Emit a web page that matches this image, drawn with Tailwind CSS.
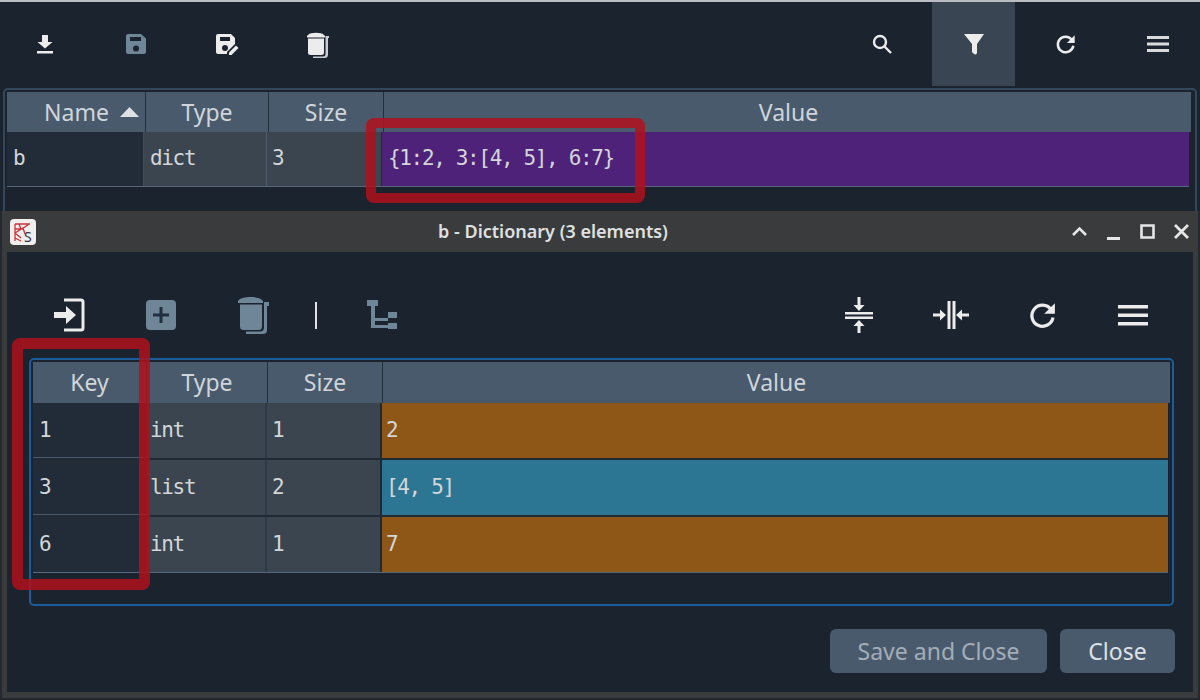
<!DOCTYPE html>
<html lang="en">
<head>
  <meta charset="UTF-8" />
  <title>b - Dictionary (3 elements)</title>
  <script src="https://cdn.jsdelivr.net/npm/@tailwindcss/browser@4"></script>
</head>
<body class="bg-[#1a232e] overflow-hidden">
<div class="relative w-[1200px] h-[700px] overflow-hidden flex flex-col font-['Noto_Sans',sans-serif] text-[#cfd5da]">
  <div class="h-[2px] bg-[#b9bec4] shrink-0"></div>

  <!-- main toolbar -->
  <div class="h-[84px] shrink-0 flex justify-between pl-[3px] pr-[1px]">
    <div class="flex gap-[8px]">
      <button class="w-[83px] flex items-center justify-center">
        <svg width="24" height="24" viewBox="0 0 24 24" fill="#ececec"><path d="M9 3h6v7h4.500L12 16.500 4.500 10H9z"/><path d="M4 19h16v2.500H4z"/></svg>
      </button>
      <button class="w-[83px] flex items-center justify-center">
        <svg width="24" height="24" viewBox="0 0 24 24" fill="#6f8598"><path fill-rule="evenodd" d="M4 2h13l5 4.500V20a2 2 0 0 1-2 2H4a2 2 0 0 1-2-2V4a2 2 0 0 1 2-2zm2 3v4h11V5zm6 8.500a3 3 0 1 0 0 6 3 3 0 0 0 0-6z"/></svg>
      </button>
      <button class="w-[83px] flex items-center justify-center">
        <svg width="24" height="24" viewBox="0 0 24 24" fill="#ececec"><path fill-rule="evenodd" d="M3 2h13l4 4v6l-8 8v2H3a2 2 0 0 1-2-2V4a2 2 0 0 1 2-2zm2 3v4h10V5zm5 8a3 3 0 1 0 0 6 3 3 0 0 0 0-6z"/><path d="M14 20.500l7-7 2.500 2.500-7 7H14z"/></svg>
      </button>
      <button class="w-[83px] flex items-center justify-center">
        <svg width="22" height="27" viewBox="0 0 22 27" fill="#ececec"><path d="M1 4C3 1 15 1 17 4l1 1v1.500H0V5z"/><path d="M1 7.500h16v14a2.500 2.500 0 0 1-2.500 2.500h-11A2.500 2.500 0 0 1 1 21.500z"/><path d="M18.500 5H22v2h-1v16.500a3.500 3.500 0 0 1-3.500 3.500H6v-1.500h10a2.500 2.500 0 0 0 2.500-2.500z" fill="#c9ccd0"/></svg>
      </button>
    </div>
    <div class="flex gap-[9px]">
      <button class="w-[83px] flex items-center justify-center">
        <svg width="24" height="24" viewBox="0 0 24 24" fill="none" stroke="#ececec" stroke-width="2.400"><circle cx="10" cy="10" r="6"/><path d="M14.500 14.500 21 21"/></svg>
      </button>
      <button class="w-[83px] flex items-center justify-center bg-[#3a4553]">
        <svg width="22" height="24" viewBox="0 0 22 24" fill="#ececec"><path d="M1 2h20l-7 10v8.500c0 1.500-1 2.500-3 1.500l-2-2v-8z"/></svg>
      </button>
      <button class="w-[83px] flex items-center justify-center">
        <svg width="22" height="22" viewBox="0 0 24 24" fill="none" stroke="#ececec" stroke-width="2.800"><path d="M18.500 7.500A8.500 8.500 0 1 0 20 14"/><path d="M21.500 2.500v8.500H13z" fill="#ececec" stroke="none"/></svg>
      </button>
      <button class="w-[83px] flex items-center justify-center">
        <svg width="22" height="16" viewBox="0 0 22 16" fill="#d9dadc"><path d="M0 0h22v3H0zM0 6.500h22v3H0zM0 13h22v3H0z"/></svg>
      </button>
    </div>
  </div>

  <!-- variable table -->
  <div class="h-[123px] shrink-0 ml-[3px] mr-[3px] mt-[2px] border-x-2 border-t-2 border-[#34475a] rounded-t-[5px] pl-[2px] pr-[4px] pt-[2px]">
    <div class="grid grid-cols-[139px_123px_115px_1fr] h-[40px] bg-[#4a5a6d] text-[23px] leading-[40px] text-center">
      <div class="border-r border-[#22303d] flex items-center justify-center gap-[11px] pl-[31px]">Name<svg width="19" height="10" viewBox="0 0 19 10" fill="#dfe2e5" class="shrink-0"><path d="M9.500 0 19 10H0z"/></svg></div>
      <div class="border-r border-[#22303d]">Type</div>
      <div class="border-r border-[#22303d]">Size</div>
      <div class="pl-[2px]">Value</div>
    </div>
    <div class="grid grid-cols-[137px_123px_115px_1fr] h-[55px] font-['DejaVu_Sans_Mono',monospace] text-[21px] tracking-[-1.350px] leading-[52px] text-[#d3d6d9] border-b border-[#56677a] mr-[2px]">
      <div class="bg-[#222c38] border-r border-[#3d4e60] pl-[6px]">b</div>
      <div class="bg-[#3b4550] border-r border-[#4d5c6c] pl-[6px]">dict</div>
      <div class="bg-[#3b4550] border-r border-[#1f2a35] pl-[5px]">3</div>
      <div class="bg-[#4f227a] pl-[6px]">{1:2, 3:[4, 5], 6:7}</div>
    </div>
  </div>

  <!-- dialog -->
  <div class="flex-1 flex flex-col bg-[#3a3b3c] border-x-2 border-b-2 border-[#23292f]">
    <div class="h-[41px] shrink-0 flex items-center pl-[8px] pr-[7px]">
      <svg width="26" height="26" viewBox="0 0 26 26" class="shrink-0">
        <rect width="26" height="26" rx="4" fill="#f1eeee"/>
        <path d="M5 5h15M5 5v17M5 10h7l7-5M5 14l8-5 2 6M9 5l2 5M5 19l6 3M5 14l6 5" fill="none" stroke="#c8353f" stroke-width="1.300"/>
        <text x="14" y="23" font-family="Noto Sans" font-size="14" fill="#2d333a">S</text>
      </svg>
      <div class="flex-1 text-center text-[18px] font-semibold text-[#dfe0e1]">b - Dictionary (3 elements)</div>
      <div class="flex items-center gap-[15px]">
        <svg width="19" height="19" viewBox="0 0 19 19" fill="none" stroke="#e6e6e6" stroke-width="2.600"><path d="M3 13l6.500-6.500L16 13"/></svg>
        <svg width="19" height="19" viewBox="0 0 19 19" fill="#e6e6e6"><path d="M3 15h13v3H3z"/></svg>
        <svg width="19" height="19" viewBox="0 0 19 19" fill="none" stroke="#e6e6e6" stroke-width="2.600"><path d="M3.500 3.500h12v12h-12z"/></svg>
        <svg width="19" height="19" viewBox="0 0 19 19" fill="none" stroke="#e6e6e6" stroke-width="2.800"><path d="M3 3l13 13M16 3 3 16"/></svg>
      </div>
    </div>

    <div class="flex-1 mx-[5px] mb-[6px] bg-[#1a232e] flex flex-col">
      <!-- dialog toolbar -->
      <div class="h-[106px] shrink-0 pt-[20px] flex justify-between items-center pl-[16px] pr-[16px]">
        <div class="flex items-center">
          <button class="w-[92px] flex justify-center">
            <svg width="32" height="34" viewBox="0 0 32 34" fill="none"><path d="M1 14h12V8l10 9-10 9v-6H1z" fill="#ececec"/><path d="M11 2h17a2 2 0 0 1 2 2v26a2 2 0 0 1-2 2H11" stroke="#ececec" stroke-width="3"/></svg>
          </button>
          <button class="w-[92px] flex justify-center">
            <svg width="30" height="30" viewBox="0 0 30 30"><rect width="30" height="30" rx="4" fill="#6f8598"/><path d="M13.500 7h3v6.500H23v3h-6.500V23h-3v-6.500H7v-3h6.500z" fill="#22303d"/></svg>
          </button>
          <button class="w-[92px] flex justify-center">
            <svg width="31" height="40" viewBox="0 0 31 40" fill="#6f8598"><path d="M1 5C4 1 21 1 24 5l1 1v2H0V6z"/><path d="M2 9.500h22v22a3.500 3.500 0 0 1-3.500 3.500h-15A3.500 3.500 0 0 1 2 31.500z"/><path d="M26 7h5v4h-2v24a4 4 0 0 1-4 4H8v-2.500h14a4 4 0 0 0 4-4z"/></svg>
          </button>
          <div class="w-[34px] flex justify-center"><div class="w-[2px] h-[27px] bg-[#dfe2e5]"></div></div>
          <button class="w-[92px] ml-[3px] flex justify-center">
            <svg width="30" height="30" viewBox="0 0 30 30" fill="#6f8598"><path d="M0 0h11v6H0zM21 12h9v6h-9zM21 23h9v6h-9z"/><path d="M4 6h4v22H4zM8 18h13v3H8zM8 25h13v3H8z"/></svg>
          </button>
        </div>
        <div class="flex items-center">
          <button class="w-[92px] flex justify-center">
            <svg width="28" height="36" viewBox="0 0 28 36" fill="#ececec"><path d="M12.500 0h3v8h4l-5.500 6-5.500-6h4zM0 15h28v2.500H0zM0 19.500h28V22H0zM14 23l5.500 6h-4v7h-3v-7h-4z"/></svg>
          </button>
          <button class="w-[92px] flex justify-center">
            <svg width="36" height="28" viewBox="0 0 36 28" fill="#ececec"><path d="M0 12.500h7v-4l6 5.500-6 5.500v-4H0zM14.500 0h3v28h-3zM19.500 0h3v28h-3zM36 12.500h-7v-4l-6 5.500 6 5.500v-4h7z"/></svg>
          </button>
          <button class="w-[92px] flex justify-center">
            <svg width="30" height="30" viewBox="0 0 24 24" fill="none" stroke="#ececec" stroke-width="2.600"><path d="M18.500 7.500A8.500 8.500 0 1 0 20 14"/><path d="M21.500 2.500v8.500H13z" fill="#ececec" stroke="none"/></svg>
          </button>
          <button class="w-[88px] flex justify-center">
            <svg width="30" height="21" viewBox="0 0 30 21" fill="#ececec"><path d="M0 0h30v3.500H0zM0 8.500h30V12H0zM0 17h30v3.500H0z"/></svg>
          </button>
        </div>
      </div>

      <!-- dictionary table -->
      <div class="h-[248px] shrink-0 ml-[22px] mr-[19px] border-2 border-[#1c5c9a] rounded-[5px] pt-[2px] pl-[2px] pr-[2px]">
        <div class="grid grid-cols-[114px_121px_115px_1fr] h-[41px] bg-[#4a5a6d] text-[23px] leading-[41px] text-center">
          <div class="border-r border-[#22303d]">Key</div>
          <div class="border-r border-[#22303d]">Type</div>
          <div class="border-r border-[#22303d]">Size</div>
          <div>Value</div>
        </div>
        <div class="mr-[2px] font-['DejaVu_Sans_Mono',monospace] text-[21px] tracking-[-1.350px] leading-[54px] text-[#d3d6d9]">
          <div class="grid grid-cols-[114px_120px_115px_1fr] h-[57px] border-b-2 border-[#1f2a35]">
            <div class="bg-[#222c38] border-b border-[#4a5a6d] pl-[6px]">1</div>
            <div class="bg-[#3b4550] border-r-2 border-[#2c3a49] pl-[3px]">int</div>
            <div class="bg-[#3b4550] border-r-2 border-[#1f2a35] pl-[5px]">1</div>
            <div class="bg-[#8e5718] pl-[4px]">2</div>
          </div>
          <div class="grid grid-cols-[114px_120px_115px_1fr] h-[57px] border-b-2 border-[#1f2a35]">
            <div class="bg-[#222c38] border-b border-[#4a5a6d] pl-[6px]">3</div>
            <div class="bg-[#3b4550] border-r-2 border-[#2c3a49] pl-[3px]">list</div>
            <div class="bg-[#3b4550] border-r-2 border-[#1f2a35] pl-[5px]">2</div>
            <div class="bg-[#2c7694] pl-[4px]">[4, 5]</div>
          </div>
          <div class="grid grid-cols-[114px_120px_115px_1fr] h-[56px] border-b border-[#56677a]">
            <div class="bg-[#222c38] pl-[6px]">6</div>
            <div class="bg-[#3b4550] border-r-2 border-[#2c3a49] pl-[3px]">int</div>
            <div class="bg-[#3b4550] border-r-2 border-[#1f2a35] pl-[5px]">1</div>
            <div class="bg-[#8e5718] pl-[4px]">7</div>
          </div>
        </div>
      </div>

      <!-- buttons -->
      <div class="flex justify-end gap-[13px] mt-[23px] mr-[18px]">
        <button class="w-[217px] h-[44px] rounded-[6px] bg-[#4a5a6d] text-[23px] text-[#a3adb8]">Save and Close</button>
        <button class="w-[115px] h-[44px] rounded-[6px] bg-[#4a5a6d] text-[23px] text-[#dde1e5]">Close</button>
      </div>
    </div>
  </div>

  <!-- red highlight annotations -->
  <div class="absolute left-[366px] top-[118px] w-[279px] h-[85px] border-[10px] border-[#b0101c]/85 rounded-[8px]"></div>
  <div class="absolute left-[12px] top-[338px] w-[138px] h-[252px] border-[11px] border-[#b0101c]/85 rounded-[8px]"></div>
</div>
</body>
</html>
